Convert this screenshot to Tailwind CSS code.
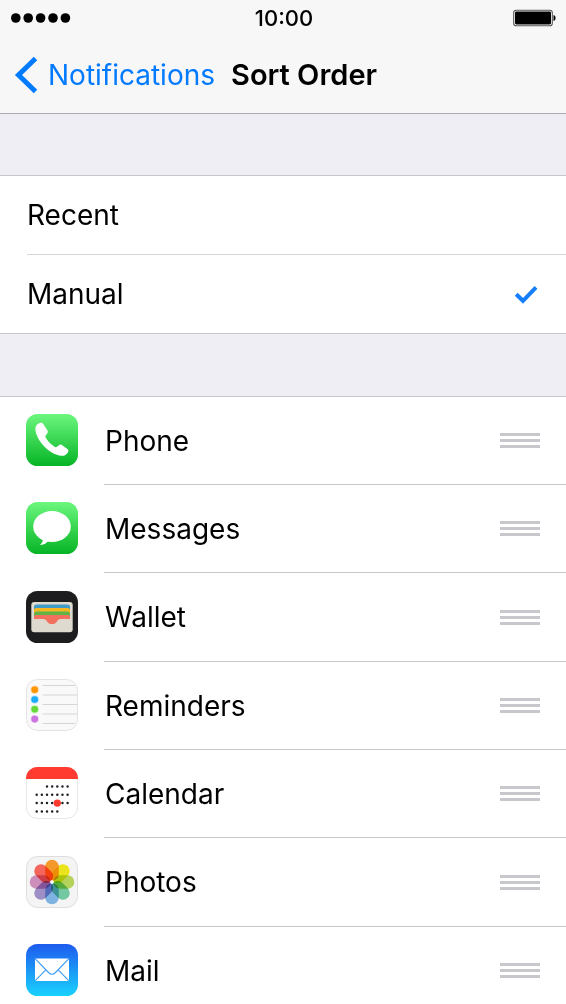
<!DOCTYPE html>
<html lang="en">

<head>
    <meta charset="UTF-8">
    <meta name="viewport" content="width=device-width, initial-scale=1.0">
    <title>Sort Order</title>
    <script src="https://cdn.jsdelivr.net/npm/@tailwindcss/browser@4"></script>
</head>

<body class="bg-[#efeef4] font-[Inter,sans-serif] text-[28px] leading-9 text-black">
    <header class="bg-[#f7f7f7] border-b border-[#acacb0]">
        <!-- Status bar -->
        <div class="grid grid-cols-[1fr_auto_1fr] items-center h-9 pl-[11px] pr-[9px]">
            <svg class="w-[60px] h-[10px]" viewBox="0 0 60 10" role="img" aria-label="Signal strength">
                <circle cx="4.8" cy="5" r="4.8" />
                <circle cx="17.2" cy="5" r="4.8" />
                <circle cx="29.6" cy="5" r="4.8" />
                <circle cx="42" cy="5" r="4.8" />
                <circle cx="54.4" cy="5" r="4.8" />
            </svg>
            <span class="text-[22px] leading-6 font-medium">10:00</span>
            <svg class="w-11 h-[18px] justify-self-end" viewBox="0 0 44 18" role="img" aria-label="Battery full">
                <rect x="0.7" y="1.2" width="38.6" height="15.6" rx="2.6" fill="#fff" stroke="#555" stroke-width="1.1" />
                <rect x="2" y="2.5" width="36" height="13" rx="1.4" />
                <path d="M40.5 6c2.8.6 2.8 5.4 0 6z" />
            </svg>
        </div>

        <nav class="flex items-center h-[77px] pl-[14px]">
            <a href="#" class="flex items-center gap-[10px] text-[#007aff]">
                <svg class="w-6 h-[38px]" viewBox="0 0 24 38" fill="none" stroke="currentColor" stroke-width="5" aria-hidden="true">
                    <path d="M21.5 2.5L4.5 19l17 16.5" />
                </svg>
                Notifications
            </a>
            <h1 class="ml-4 text-[29px] font-semibold">Sort Order</h1>
        </nav>
    </header>

    <main>
        <!-- Sort mode -->
        <div role="radiogroup" aria-label="Sort Order" class="mt-[61px] bg-white border-y border-[#c8c7cc]">
            <label class="relative flex ml-[27px] h-[79px] pr-7 items-center justify-between border-b border-[#d5d5d8]">
                <span>Recent</span>
                <input type="radio" name="sort" class="peer sr-only">
                <svg class="hidden peer-checked:block w-6 h-5" viewBox="0 0 24 20" fill="none" stroke="#157efb" stroke-width="4" aria-hidden="true">
                    <path d="M2.2 10.2l6.8 6.6L22 3.4" />
                </svg>
            </label>
            <label class="relative flex ml-[27px] h-[78px] pr-7 items-center justify-between">
                <span>Manual</span>
                <input type="radio" name="sort" class="peer sr-only" checked>
                <svg class="hidden peer-checked:block w-6 h-5" viewBox="0 0 24 20" fill="none" stroke="#157efb" stroke-width="4" aria-hidden="true">
                    <path d="M2.2 10.2l6.8 6.6L22 3.4" />
                </svg>
            </label>
        </div>

        <!-- Apps -->
        <ul class="mt-[62px] bg-white border-t border-[#c8c7cc] [&>li:nth-child(3n)]:h-[89px]">
            <li class="flex items-center h-[88px] pl-[26px]">
                <svg class="size-[52px] mb-[2px]" viewBox="0 0 52 52" aria-hidden="true">
                    <defs>
                        <linearGradient id="green" x2="0" y2="1">
                            <stop offset="0" stop-color="#6cf77e" />
                            <stop offset="1" stop-color="#06b425" />
                        </linearGradient>
                    </defs>
                    <rect width="52" height="52" rx="11.5" fill="url(#green)" />
                    <path fill="#fff" d="M13.6 9C11 9.9 9.1 12.2 9.4 15.6C10.2 26.6 23.4 40.3 34.6 41.8C38.4 42.2 41.2 40.4 42.3 37.4C42.6 36.4 42.2 35.7 41.4 35.1L35.9 31C34.9 30.3 34 30.4 33.2 31.1L30.6 33C29.8 33.4 29 33.2 28.2 32.6C24.6 30.2 21.6 27 19.6 23.6C19.2 22.8 19.2 22.1 19.8 21.4L21.5 19C22 18.2 22 17.4 21.5 16.5L17.3 9.9C16.4 8.6 15 8.4 13.6 9Z" />
                </svg>
                <div class="flex grow self-stretch items-center justify-between ml-[26px] pl-px pr-[26px] border-b border-[#c8c7cc]">
                    <span>Phone</span>
                    <button aria-label="Reorder Phone" class="flex flex-col gap-[3px]">
                        <span class="w-10 h-[3px] bg-[#c7c7cc]"></span>
                        <span class="w-10 h-[3px] bg-[#c7c7cc]"></span>
                        <span class="w-10 h-[3px] bg-[#c7c7cc]"></span>
                    </button>
                </div>
            </li>
            <li class="flex items-center h-[88px] pl-[26px]">
                <svg class="size-[52px] mb-[2px]" viewBox="0 0 52 52" aria-hidden="true">
                    <rect width="52" height="52" rx="11.5" fill="url(#green)" />
                    <ellipse cx="26" cy="24.5" rx="18.8" ry="15.5" fill="#fff" />
                    <path fill="#fff" d="M16.5 34C17.5 38 16.8 40.6 14 42.9C18 43 20.6 41.4 22.6 38.5Z" />
                </svg>
                <div class="flex grow self-stretch items-center justify-between ml-[26px] pl-px pr-[26px] border-b border-[#c8c7cc]">
                    <span>Messages</span>
                    <button aria-label="Reorder Messages" class="flex flex-col gap-[3px]">
                        <span class="w-10 h-[3px] bg-[#c7c7cc]"></span>
                        <span class="w-10 h-[3px] bg-[#c7c7cc]"></span>
                        <span class="w-10 h-[3px] bg-[#c7c7cc]"></span>
                    </button>
                </div>
            </li>
            <li class="flex items-center h-[88px] pl-[26px]">
                <svg class="size-[52px] mb-[2px]" viewBox="0 0 52 52" aria-hidden="true">
                    <rect width="52" height="52" rx="11.5" fill="#1d1d1f" />
                    <rect x="5.3" y="11" width="41.4" height="30.2" rx="3" fill="#dedacf" />
                    <path fill="#3f9bc8" d="M8 19v-3.2a2.3 2.3 0 0 1 2.3-2.3h31.4a2.3 2.3 0 0 1 2.3 2.3V19z" />
                    <path fill="#f6b622" d="M8 22.5v-3.2a2.3 2.3 0 0 1 2.3-2.3h31.4a2.3 2.3 0 0 1 2.3 2.3v3.2z" />
                    <path fill="#5fb346" d="M8 26v-3.2a2.3 2.3 0 0 1 2.3-2.3h31.4a2.3 2.3 0 0 1 2.3 2.3V26z" />
                    <path fill="#f3705f" d="M8 28v-1.7A2.3 2.3 0 0 1 10.3 24h31.4a2.3 2.3 0 0 1 2.3 2.3V28H35c-2.2 0-2.9.8-3.8 2.2C29.8 32.2 28.3 33 26 33s-3.8-.8-5.2-2.8C19.9 28.8 19.2 28 17 28z" />
                </svg>
                <div class="flex grow self-stretch items-center justify-between ml-[26px] pl-px pr-[26px] border-b border-[#c8c7cc]">
                    <span>Wallet</span>
                    <button aria-label="Reorder Wallet" class="flex flex-col gap-[3px]">
                        <span class="w-10 h-[3px] bg-[#c7c7cc]"></span>
                        <span class="w-10 h-[3px] bg-[#c7c7cc]"></span>
                        <span class="w-10 h-[3px] bg-[#c7c7cc]"></span>
                    </button>
                </div>
            </li>
            <li class="flex items-center h-[88px] pl-[26px]">
                <svg class="size-[52px] mb-[2px]" viewBox="0 0 52 52" aria-hidden="true">
                    <rect x="0.5" y="0.5" width="51" height="51" rx="11" fill="#f9f9f9" stroke="#e3e3e3" />
                    <path stroke="#d6d6d6" fill="none" d="M16.5 6.5H49M16.5 16H51M16.5 25.5H51M16.5 35H51M16.5 44.5H49" />
                    <g stroke-width="1.6" stroke-opacity="0.35">
                        <circle cx="8.7" cy="10.7" r="3.3" fill="#ff9500" stroke="#ff9500" />
                        <circle cx="8.7" cy="20.5" r="3.3" fill="#1badf8" stroke="#1badf8" />
                        <circle cx="8.7" cy="30.3" r="3.3" fill="#63da38" stroke="#63da38" />
                        <circle cx="8.7" cy="40.1" r="3.3" fill="#cc73e1" stroke="#cc73e1" />
                    </g>
                </svg>
                <div class="flex grow self-stretch items-center justify-between ml-[26px] pl-px pr-[26px] border-b border-[#c8c7cc]">
                    <span>Reminders</span>
                    <button aria-label="Reorder Reminders" class="flex flex-col gap-[3px]">
                        <span class="w-10 h-[3px] bg-[#c7c7cc]"></span>
                        <span class="w-10 h-[3px] bg-[#c7c7cc]"></span>
                        <span class="w-10 h-[3px] bg-[#c7c7cc]"></span>
                    </button>
                </div>
            </li>
            <li class="flex items-center h-[88px] pl-[26px]">
                <svg class="size-[52px] mb-[2px]" viewBox="0 0 52 52" aria-hidden="true">
                    <rect x="0.5" y="0.5" width="51" height="51" rx="11" fill="#fff" stroke="#e6e6e6" />
                    <path fill="#ff3b30" d="M0 12v-.5A11.5 11.5 0 0 1 11.5 0h29A11.5 11.5 0 0 1 52 11.5v.5z" />
                    <g fill="none" stroke="#222" stroke-width="2.5" stroke-linecap="round" stroke-dasharray="0 5.15">
                        <path d="M21 19.5H41.7" />
                        <path d="M10.7 27.8H41.7" />
                        <path d="M10.7 36.1H41.7" />
                        <path d="M10.7 44.4H31.4" />
                    </g>
                    <circle cx="31.3" cy="36.1" r="3.7" fill="#ff3b30" />
                </svg>
                <div class="flex grow self-stretch items-center justify-between ml-[26px] pl-px pr-[26px] border-b border-[#c8c7cc]">
                    <span>Calendar</span>
                    <button aria-label="Reorder Calendar" class="flex flex-col gap-[3px]">
                        <span class="w-10 h-[3px] bg-[#c7c7cc]"></span>
                        <span class="w-10 h-[3px] bg-[#c7c7cc]"></span>
                        <span class="w-10 h-[3px] bg-[#c7c7cc]"></span>
                    </button>
                </div>
            </li>
            <li class="flex items-center h-[88px] pl-[26px]">
                <svg class="size-[52px] mb-[2px]" viewBox="0 0 52 52" aria-hidden="true">
                    <rect x="0.5" y="0.5" width="51" height="51" rx="11" fill="#f4f4f4" stroke="#dedede" />
                    <g transform="translate(26 26)">
                        <rect class="mix-blend-multiply" x="-6.8" y="-22.3" width="13.6" height="21" rx="6.8" fill="#ff9f2a" />
                        <rect class="mix-blend-multiply" x="-6.8" y="-22.3" width="13.6" height="21" rx="6.8" fill="#f6ee1c" transform="rotate(45)" />
                        <rect class="mix-blend-multiply" x="-6.8" y="-22.3" width="13.6" height="21" rx="6.8" fill="#bddc5e" transform="rotate(90)" />
                        <rect class="mix-blend-multiply" x="-6.8" y="-22.3" width="13.6" height="21" rx="6.8" fill="#78d0a8" transform="rotate(135)" />
                        <rect class="mix-blend-multiply" x="-6.8" y="-22.3" width="13.6" height="21" rx="6.8" fill="#84bbec" transform="rotate(180)" />
                        <rect class="mix-blend-multiply" x="-6.8" y="-22.3" width="13.6" height="21" rx="6.8" fill="#a597d0" transform="rotate(225)" />
                        <rect class="mix-blend-multiply" x="-6.8" y="-22.3" width="13.6" height="21" rx="6.8" fill="#d696c4" transform="rotate(270)" />
                        <rect class="mix-blend-multiply" x="-6.8" y="-22.3" width="13.6" height="21" rx="6.8" fill="#ff6b60" transform="rotate(315)" />
                        <circle r="1.8" fill="#fff" />
                    </g>
                </svg>
                <div class="flex grow self-stretch items-center justify-between ml-[26px] pl-px pr-[26px] border-b border-[#c8c7cc]">
                    <span>Photos</span>
                    <button aria-label="Reorder Photos" class="flex flex-col gap-[3px]">
                        <span class="w-10 h-[3px] bg-[#c7c7cc]"></span>
                        <span class="w-10 h-[3px] bg-[#c7c7cc]"></span>
                        <span class="w-10 h-[3px] bg-[#c7c7cc]"></span>
                    </button>
                </div>
            </li>
            <li class="flex items-center h-[88px] pl-[26px]">
                <svg class="size-[52px] mb-[2px]" viewBox="0 0 52 52" aria-hidden="true">
                    <defs>
                        <linearGradient id="blue" x2="0" y2="1">
                            <stop offset="0" stop-color="#1e5bee" />
                            <stop offset="1" stop-color="#19d2fd" />
                        </linearGradient>
                    </defs>
                    <rect width="52" height="52" rx="11.5" fill="url(#blue)" />
                    <rect x="9" y="14.5" width="34" height="22.5" rx="1" fill="#fff" />
                    <path fill="none" stroke="#3d9bf2" stroke-width="1.1" d="M9.3 14.8L22.5 28.5Q26 32 29.5 28.5L42.7 14.8M9.3 36.7L19.8 25.8M42.7 36.7L32.2 25.8" />
                </svg>
                <div class="flex grow self-stretch items-center justify-between ml-[26px] pl-px pr-[26px] border-b border-[#c8c7cc]">
                    <span>Mail</span>
                    <button aria-label="Reorder Mail" class="flex flex-col gap-[3px]">
                        <span class="w-10 h-[3px] bg-[#c7c7cc]"></span>
                        <span class="w-10 h-[3px] bg-[#c7c7cc]"></span>
                        <span class="w-10 h-[3px] bg-[#c7c7cc]"></span>
                    </button>
                </div>
            </li>
        </ul>
    </main>
</body>

</html>
